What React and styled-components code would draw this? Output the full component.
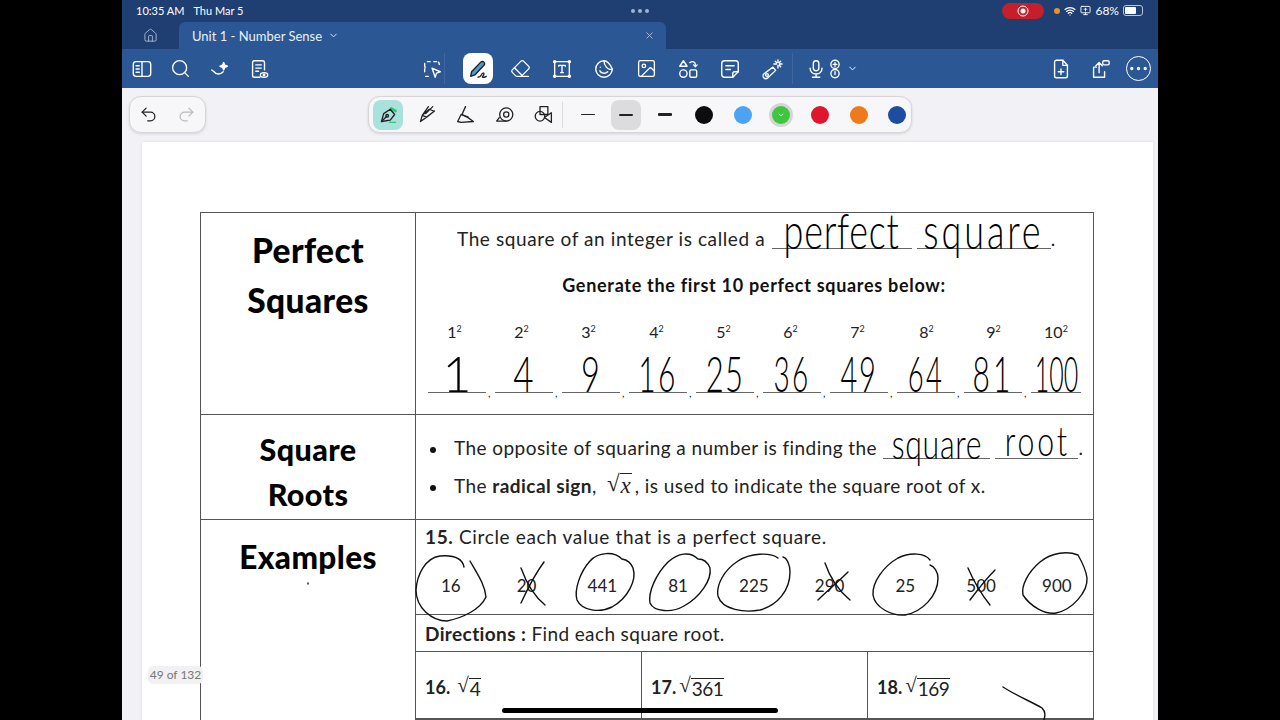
import React from "react";
import styled, { createGlobalStyle } from "styled-components";
import { ChevronDown, Ellipsis, Eraser, House, Image, MonitorUp, Redo2, Search, Undo2, Wifi, X } from "lucide-react";

const GlobalStyle = createGlobalStyle`
  html, body { margin: 0; padding: 0; background: #000; }
  body { font-family: "Lato", "Liberation Sans", sans-serif; color: #222; overflow: hidden; }
`;

const Stage = styled.div`
  position: relative;
  width: 1036px;
  height: 720px;
  margin-left: 122px;
  overflow: hidden;
  display: flex;
  flex-direction: column;
  background: #f2f2f6;
`;

const StatusBar = styled.div`
  height: 22px;
  flex-shrink: 0;
  box-sizing: border-box;
  background: #1f3e72;
  color: #fff;
  font-size: 11px;
  display: flex;
  align-items: center;
  padding: 0 15px 1px 14px;
  gap: 9px;
`;

const Dots = styled.div`
  margin-left: 379px;
  display: flex;
  gap: 3px;
  span { width: 4px; height: 4px; border-radius: 50%; background: #9fb2d0; }
`;

const Status = styled.div`
  margin-left: auto;
  display: flex;
  align-items: center;
  gap: 4px;
  font-size: 12px;
`;

const RecordPill = styled.div`
  width: 42px;
  height: 16px;
  border-radius: 8px;
  background: #c41f2a;
  display: flex;
  align-items: center;
  justify-content: center;
  margin-right: 6px;
  svg { display: block; }
`;

const OrangeDot = styled.div`
  width: 6px;
  height: 6px;
  border-radius: 50%;
  background: #e8912d;
`;

const Battery = styled.div`
  width: 20px;
  height: 11px;
  box-sizing: border-box;
  border: 1px solid #b8c4d8;
  border-radius: 3px;
  padding: 1px;
  div { width: 68%; height: 100%; background: #fff; border-radius: 1px; }
`;

const TabBar = styled.div`
  height: 27px;
  flex-shrink: 0;
  background: #1f3e72;
  display: flex;
`;

const HomeTab = styled.div`
  width: 57px;
  box-sizing: border-box;
  display: flex;
  align-items: center;
  justify-content: center;
  color: #a9b8d2;
`;

const ActiveTab = styled.div`
  width: 487px;
  border-radius: 6px 6px 0 0;
  background: #2b5795;
  color: #eaf0f8;
  font-size: 13px;
  display: flex;
  align-items: center;
  padding: 0 11px 0 13px;
  gap: 6px;
  box-sizing: border-box;
  svg:last-child { margin-left: auto; color: #a9bcd8; }
`;

const Toolbar = styled.div`
  height: 39px;
  flex-shrink: 0;
  background: #2b5795;
  display: flex;
  align-items: center;
  color: #fff;
`;

const ToolCell = styled.div`
  width: ${(p) => p.$w || 42}px;
  height: 31px;
  flex-shrink: 0;
  display: flex;
  align-items: center;
  justify-content: center;
  box-sizing: border-box;
  ${(p) => p.$divider && "border-right: 1px solid #40689f; margin-right: 12px;"}
  ${(p) => p.$active && "background: #fff; border-radius: 8px; width: 30px; margin: 0 6px; color: #222;"}
  ${(p) => p.$tight && "svg + svg { margin-left: -4px; } svg:last-child { margin-left: 1px; }"}
`;

const Spacer = styled.div`
  width: ${(p) => p.$w}px;
  flex-shrink: 0;
`;

const RightTools = styled.div`
  margin-left: auto;
  display: flex;
`;

const PaletteRow = styled.div`
  display: flex;
  height: 37px;
  margin-top: 8px;
  flex-shrink: 0;
  padding-left: 7px;
`;

const Pill = styled.div`
  width: ${(p) => p.$w}px;
  margin-left: ${(p) => p.$ml || 0}px;
  box-sizing: border-box;
  border: 1px solid #d6d6da;
  border-radius: 12px;
  background: #f7f7f9;
  box-shadow: 0 1px 3px rgba(0, 0, 0, 0.12);
  display: flex;
  align-items: center;
  color: #222;
`;

const UndoPill = styled(Pill)`
  justify-content: space-between;
  padding: 0 9px;
`;

const PaletteCell = styled.div`
  width: 38.7px;
  height: 100%;
  flex-shrink: 0;
  display: flex;
  align-items: center;
  justify-content: center;
`;

const PaletteChip = styled.div`
  width: 30px;
  height: 30px;
  border-radius: 8px;
  display: flex;
  align-items: center;
  justify-content: center;
  background: ${(p) => p.$bg || "transparent"};
`;

const PaletteDivider = styled.div`
  width: 6px;
  flex-shrink: 0;
  height: 26px;
  &::before { content: ""; display: block; width: 1px; height: 100%; background: #ddd; }
`;

const WidthBar = styled.div`
  width: 14px;
  height: ${(p) => p.$h}px;
  background: #222;
  border-radius: 1px;
`;

const Swatch = styled.div`
  width: 18px;
  height: 18px;
  border-radius: 50%;
  background: ${(p) => p.$color};
  ${(p) => p.$selected && "box-shadow: 0 0 0 3px #d5d5d8;"}
  display: flex;
  align-items: center;
  justify-content: center;
  color: #e8ffe8;
`;

const Page = styled.div`
  flex: 1;
  margin: 9px 5px 0 20px;
  padding: 70px 59px 0 58px;
  background: #fff;
  box-shadow: 0 0 3px rgba(0, 0, 0, 0.1);
`;

const Table = styled.div`
  display: grid;
  grid-template-columns: 215px 1fr;
  grid-template-rows: 202px 105px 320px;
  border-top: 1px solid #555;
  border-left: 1px solid #555;
`;

const TitleCell = styled.div`
  border-right: 1px solid #555;
  border-bottom: 1px solid #555;
  text-align: center;
  font-size: ${(p) => p.$size}px;
  font-weight: 900;
  letter-spacing: 0.4px;
  color: #000;
  line-height: ${(p) => p.$lh || 50}px;
  padding-top: 12px;
`;

const BodyCell = styled.div`
  border-right: 1px solid #555;
  border-bottom: 1px solid #555;
  min-width: 0;
`;

const Sentence = styled.div`
  display: flex;
  align-items: flex-end;
  height: 36px;
  padding-left: ${(p) => p.$pl || 0}px;
  font-size: 19px;
  line-height: 20px;
  letter-spacing: 0.6px;
  white-space: pre;
`;

const Blank = styled.span`
  display: inline-flex;
  justify-content: center;
  align-items: flex-end;
  width: ${(p) => p.$w}px;
  margin-left: ${(p) => p.$ml || 0}px;
  height: ${(p) => p.$h || 24}px;
  border-bottom: 1px solid #666;
  color: #000;
`;

const Ink = styled.span`
  display: inline-block;
  font-family: "Lato", sans-serif;
  font-weight: 300;
  font-size: ${(p) => p.$size}px;
  letter-spacing: ${(p) => p.$ls || 0}px;
  line-height: 1;
  transform: scaleX(${(p) => p.$sx || 1});
  transform-origin: center bottom;
  margin-bottom: ${(p) => p.$mb || 0}px;
  white-space: nowrap;
`;

const CenterHead = styled.div`
  text-align: center;
  font-size: 18px;
  font-weight: 700;
  letter-spacing: 0.7px;
  margin-top: 22px;
  line-height: 28px;
  padding-right: 1px;
  color: #111;
`;

const Squares = styled.div`
  display: flex;
  margin: 22px 0 0 12px;
`;

const SquareItem = styled.div`
  width: 67px;
  flex-shrink: 0;
  &:last-child { width: 50px; }
`;

const Power = styled.div`
  font-size: 16px;
  height: 22px;
  line-height: 22px;
  text-align: center;
  padding-right: ${(p) => p.$pr}px;
  sup { font-size: 9px; line-height: 0; vertical-align: 6px; }
`;

const AnswerRow = styled.div`
  display: flex;
  align-items: flex-end;
  margin-top: 9px;
  font-size: 11px;
  span.comma { margin-left: 2px; line-height: 1; transform: translateY(5px); }
`;

const BulletLine = styled.div`
  display: flex;
  align-items: flex-end;
  padding-left: 14px;
  height: 27px;
  font-size: 19px;
  letter-spacing: 0.44px;
  white-space: pre;
  margin-top: ${(p) => p.$mt || 0}px;
  &::before {
    content: "";
    width: 6px;
    height: 6px;
    border-radius: 50%;
    background: #111;
    margin: 0 18px 6px 0;
  }
`;

const Radical = styled.span`
  font-family: "Liberation Serif", serif;
  font-size: ${(p) => p.$size || 20}px;
  display: inline-flex;
  align-items: flex-end;
  letter-spacing: 0;
  margin: ${(p) => p.$m || 0};
`;

const Radicand = styled.span`
  border-top: 1px solid #222;
  line-height: 1;
  padding: 0 1px;
  font-size: ${(p) => (p.$italic ? "inherit" : "19px")};
  letter-spacing: ${(p) => (p.$italic ? 0 : "-0.5px")};
  font-style: ${(p) => (p.$italic ? "italic" : "normal")};
  font-family: ${(p) => (p.$italic ? '"Liberation Serif", serif' : '"Lato", sans-serif')};
`;

const ExampleCell = styled(BodyCell)`
  display: flex;
  flex-direction: column;
`;

const CircleBlock = styled.div`
  height: 95px;
  flex-shrink: 0;
  box-sizing: border-box;
  border-bottom: 1px solid #555;
  padding: 5px 0 0 9px;
`;

const PromptLine = styled.div`
  font-size: 19px;
  line-height: 24px;
  letter-spacing: 0.65px;
  b { font-weight: 700; }
`;

const Values = styled.div`
  display: grid;
  grid-template-columns: repeat(9, 75.75px);
  margin: 22px 0 0 -12px;
  font-size: 17px;
  text-align: center;
  line-height: 30px;
`;

const DirectionBlock = styled.div`
  height: 37px;
  flex-shrink: 0;
  box-sizing: border-box;
  border-bottom: 1px solid #555;
  padding-left: 9px;
  font-size: 19px;
  letter-spacing: 0.38px;
  line-height: 37px;
  b { font-weight: 700; }
`;

const RootRow = styled.div`
  display: grid;
  grid-template-columns: 226px 226px 1fr;
  height: 66px;
  flex-shrink: 0;
  border-bottom: 2px solid #555;
`;

const RootCell = styled.div`
  border-right: 1px solid #555;
  padding: 0 0 20px 9px;
  display: flex;
  align-items: flex-end;
  gap: ${(p) => p.$gap || 3}px;
  font-size: 18px;
  &:last-child { border-right: none; }
  b { font-weight: 700; line-height: 22px; }
`;

const PageCount = styled.div`
  position: absolute;
  left: 26px;
  top: 666px;
  width: 55px;
  height: 18px;
  border-radius: 5px;
  background: #f1f1f3;
  color: #777;
  font-size: 12px;
  line-height: 18px;
  text-align: center;
`;

const HomeIndicator = styled.div`
  position: absolute;
  left: 380px;
  top: 708px;
  width: 276px;
  height: 5px;
  border-radius: 3px;
  background: #000;
`;

const InkLayer = styled.svg`
  position: absolute;
  left: -122px;
  top: 0;
  width: 1280px;
  height: 720px;
  pointer-events: none;
  fill: none;
  stroke: #111;
  stroke-width: 1.4;
  stroke-linecap: round;
  stroke-linejoin: round;
`;

const Ic = ({ size = 22, sw = 1.5, children }) => (
  <svg width={size} height={size} viewBox="0 0 24 24" fill="none" stroke="currentColor" strokeWidth={sw} strokeLinecap="round" strokeLinejoin="round">
    {children}
  </svg>
);

const SidebarIcon = () => (
  <Ic><rect x="2.500" y="4" width="19" height="16" rx="3" /><path d="M12 4v16M5.500 8.500h3.500M5.500 12h3.500M5.500 15.500h3.500" /></Ic>
);
const SparkIcon = () => (
  <Ic><path d="M3 13l2.500 2M5.500 15c2 3 7 3.500 10 0" /><path d="M16 5l1.200 2.800L20 9l-2.800 1.200L16 13l-1.200-2.800L12 9l2.800-1.200z" fill="currentColor" /></Ic>
);
const DocEyeIcon = () => (
  <Ic><path d="M13 21H7a2 2 0 0 1-2-2V5a2 2 0 0 1 2-2h9a2 2 0 0 1 2 2v8" /><path d="M8.500 7.500h6M8.500 11h6M8.500 14.500h3" /><ellipse cx="17.500" cy="18.500" rx="4" ry="2.500" /><circle cx="17.500" cy="18.500" r=".8" /></Ic>
);
const LassoIcon = () => (
  <Ic><path d="M7 4h3M14 4h3c2 0 3 1 3 3M4 8V6M4 12v3M5 20h5M13 20h0M4 8c0 1 1 2 0 4" strokeDasharray="3 2" /><path d="M12 11l9 4-4 1.500-1.500 4.500z" /></Ic>
);
const PenSignIcon = () => (
  <Ic><path d="M4 20l1-5L15 4.500c1-1 2.500-1 3.500 0s1 2.500 0 3.500L8.500 18.500z" fill="#4d9bd0" stroke="#222" /><path d="M12 21c2 0 3-1 4-3 .8-2 2.500-2 2.500-.5 0 2-2.500 3-1.500 3.500 1.500.5 3-.5 4-1" /></Ic>
);
const TextBoxIcon = () => (
  <Ic><rect x="4" y="4" width="16" height="16" /><path d="M8.500 9V8h7v1M12 8v8M10.500 16h3" /><circle cx="4" cy="4" r="1.200" /><circle cx="20" cy="4" r="1.200" /><circle cx="4" cy="20" r="1.200" /><circle cx="20" cy="20" r="1.200" /></Ic>
);
const StickerIcon = () => (
  <Ic><path d="M12 3a9 9 0 1 0 9 9c-2 1-5 0-6.500-2S12 5 12 3z" /><path d="M12 3c3 0 7 3.500 9 9" /><path d="M7.500 14c1.500 3 6 3.500 8.500 1M8 10h0" /></Ic>
);
const ShapesIcon = () => (
  <Ic><path d="M7 3l4 6H3z" /><path d="M14 5c3-2 6-1 6 2v2M18 7.500l2 2 2-2" /><circle cx="7" cy="17" r="4" /><rect x="14" y="13" width="7.500" height="8" rx="1.500" /></Ic>
);
const NoteIcon = () => (
  <Ic><path d="M15 21H6a3 3 0 0 1-3-3V6a3 3 0 0 1 3-3h12a3 3 0 0 1 3 3v9z" /><path d="M15 21v-4a2 2 0 0 1 2-2h4M7.500 8.500h9M7.500 12.500h5" /></Ic>
);
const LaserIcon = () => (
  <Ic><path d="M3 17.500L13 10l3 3.500-9 8.500c-1.500 1-3 .5-4-.5s-1-3 0-4z" /><circle cx="6.500" cy="18.500" r="1.500" /><path d="M18.500 2v3M18.500 8v3M14 6.500h3M20 6.500h3M15.500 3.500l1.500 1.500M20 8l1.500 1.500M21.500 3.500L20 5" /></Ic>
);
const MicIcon = () => (
  <Ic><rect x="8" y="3" width="6" height="11" rx="3" /><path d="M4.500 11c0 4 3 6.500 6.500 6.500s6.500-2.500 6.500-6.500M11 17.500V21M7 21h8" /></Ic>
);
const AudioIcon = () => (
  <Ic><circle cx="12" cy="7" r="4.500" /><path d="M12 5v4M10 7h4" /><circle cx="12" cy="17" r="4.500" /><path d="M12 15v3" /></Ic>
);
const PageAddIcon = () => (
  <Ic><path d="M14 2.500H7a2 2 0 0 0-2 2v15a2 2 0 0 0 2 2h10a2 2 0 0 0 2-2V8z" /><path d="M14 2.500V8h5M12 12v6M9 15h6" /></Ic>
);
const ShareIcon = () => (
  <Ic><path d="M8 10H5v11h12v-6" /><path d="M11 16V5M7.500 8.500L11 5l3.500 3.500" /><rect x="15" y="3" width="7" height="4.500" rx="1.500" /></Ic>
);
const FountainPen = () => (
  <Ic size={21}><path d="M15 5l5 3" stroke="#37c46b" strokeWidth="3" /><path d="M4 20l2.500-9L14 6l5 6-5 6.500z" /><path d="M4 20l6-6" /><circle cx="10.500" cy="13.500" r="1.500" /><path d="M13 21h7" stroke="#37c46b" strokeWidth="1.500" /></Ic>
);
const PencilTool = () => (
  <Ic size={21}><path d="M4 20l2-7 8-7 5 2M6 13l5 2 9-7M4 20l7-5M13 3l-7 10M18 3l-8 8" /></Ic>
);
const MarkerTool = () => (
  <Ic size={21}><path d="M12 3L8 12M3 20l4-8 7 3 7 5-14 1z" /><path d="M8 12l7 3" /></Ic>
);
const TapeTool = () => (
  <Ic size={21}><circle cx="14" cy="12" r="7.500" /><circle cx="14" cy="12" r="3" /><path d="M3 19.500h11M3 19.500l3-4" /></Ic>
);
const ShapeTool = () => (
  <Ic size={21}><rect x="8" y="3" width="9" height="9" /><circle cx="8" cy="14" r="5.500" /><path d="M21 10v11l-8-5.500z" /></Ic>
);

const SQUARES = [
  ["1", "1", 14, 1, 0],
  ["2", "4", 14, 0.7, 0],
  ["3", "9", 14, 0.65, 0],
  ["4", "16", 12, 0.6, 4],
  ["5", "25", 12, 0.62, 2],
  ["6", "36", 12, 0.56, 4],
  ["7", "49", 12, 0.58, 3],
  ["8", "64", 8, 0.55, 4],
  ["9", "81", 8, 0.6, 5],
  ["10", "100", 0, 0.5, 0],
];

const VALUES = ["16", "20", "441", "81", "225", "290", "25", "500", "900"];

const COLORS = ["#0d0d0d", "#4aa3f5", "#3fc63f", "#e0162f", "#ee7a1c", "#1c4da0"];

export default function App() {
  return (
    <Stage>
      <GlobalStyle />
      <StatusBar>
        <span>10:35 AM</span>
        <span>Thu Mar 5</span>
        <Dots><span /><span /><span /></Dots>
        <Status>
          <RecordPill>
            <svg width="12" height="12" viewBox="0 0 12 12"><circle cx="6" cy="6" r="5" fill="none" stroke="#fff" /><circle cx="6" cy="6" r="2.500" fill="#fff" /></svg>
          </RecordPill>
          <OrangeDot />
          <Wifi size={12} strokeWidth={2.500} />
          <MonitorUp size={11} />
          <span>68%</span>
          <Battery><div /></Battery>
        </Status>
      </StatusBar>
      <TabBar>
        <HomeTab><House size={15} strokeWidth={1.500} /></HomeTab>
        <ActiveTab>
          <span>Unit 1 - Number Sense</span>
          <ChevronDown size={11} />
          <X size={11} />
        </ActiveTab>
      </TabBar>
      <Toolbar>
        <ToolCell $w={39}><SidebarIcon /></ToolCell>
        <ToolCell $w={39}><Search size={21} strokeWidth={1.500} /></ToolCell>
        <ToolCell $w={39}><SparkIcon /></ToolCell>
        <ToolCell $w={39}><DocEyeIcon /></ToolCell>
        <Spacer $w={141} />
        <ToolCell $w={26} $divider><LassoIcon /></ToolCell>
        <ToolCell $active><PenSignIcon /></ToolCell>
        <ToolCell><Eraser size={21} strokeWidth={1.500} /></ToolCell>
        <ToolCell><TextBoxIcon /></ToolCell>
        <ToolCell><StickerIcon /></ToolCell>
        <ToolCell><Image size={21} strokeWidth={1.500} /></ToolCell>
        <ToolCell><ShapesIcon /></ToolCell>
        <ToolCell><NoteIcon /></ToolCell>
        <ToolCell $divider><LaserIcon /></ToolCell>
        <ToolCell $w={54} $tight>
          <MicIcon />
          <AudioIcon />
          <ChevronDown size={11} />
        </ToolCell>
        <RightTools>
          <ToolCell $w={39}><PageAddIcon /></ToolCell>
          <ToolCell $w={39}><ShareIcon /></ToolCell>
          <ToolCell $w={39}><Ellipsis size={23} strokeWidth={1.500} style={{ border: "1.500px solid #fff", borderRadius: "50%" }} /></ToolCell>
        </RightTools>
      </Toolbar>
      <PaletteRow>
        <UndoPill $w={77}>
          <Undo2 size={19} strokeWidth={1.600} />
          <Redo2 size={19} strokeWidth={1.600} color="#bbb" />
        </UndoPill>
        <Pill $w={544} $ml={162}>
          <PaletteCell><PaletteChip $bg="#a9e1dd"><FountainPen /></PaletteChip></PaletteCell>
          <PaletteCell><PencilTool /></PaletteCell>
          <PaletteCell><MarkerTool /></PaletteCell>
          <PaletteCell><TapeTool /></PaletteCell>
          <PaletteCell><ShapeTool /></PaletteCell>
          <PaletteDivider />
          <PaletteCell><WidthBar $h={1} /></PaletteCell>
          <PaletteCell><PaletteChip $bg="#dcdcdf"><WidthBar $h={2} /></PaletteChip></PaletteCell>
          <PaletteCell><WidthBar $h={3} /></PaletteCell>
          {COLORS.map((c, i) => (
            <PaletteCell key={c}>
              <Swatch $color={c} $selected={i === 2}>
                {i === 2 && <ChevronDown size={8} strokeWidth={3} />}
              </Swatch>
            </PaletteCell>
          ))}
        </Pill>
      </PaletteRow>
      <Page>
        <Table>
          <TitleCell $size={33.5}>Perfect<br />Squares</TitleCell>
          <BodyCell>
            <Sentence $pl={41}>
              The square of an integer is called a{" "}
              <Blank $w={140} $ml={1}><Ink $size={50} $ls={1} $sx={0.72} $mb={-7}>perfect</Ink></Blank>
              <Blank $w={134} $ml={5}><Ink $size={50} $ls={4} $sx={0.72} $mb={-7}>square</Ink></Blank>.
            </Sentence>
            <CenterHead>Generate the first 10 perfect squares below:</CenterHead>
            <Squares>
              {SQUARES.map(([base, ans, pr, sx, ls], i) => (
                <SquareItem key={base}>
                  <Power $pr={pr}>{base}<sup>2</sup></Power>
                  <AnswerRow>
                    <Blank $w={i === 9 ? 50 : 58} $h={40}>
                      <Ink $size={50} $sx={sx} $ls={ls} $mb={-6}>{ans}</Ink>
                    </Blank>
                    {i < 9 && <span className="comma">,</span>}
                  </AnswerRow>
                </SquareItem>
              ))}
            </Squares>
          </BodyCell>
          <TitleCell $size={30.5} $lh={45}>Square<br />Roots</TitleCell>
          <BodyCell>
            <BulletLine $mt={17}>
              The opposite of squaring a number is finding the{" "}
              <Blank $w={107} $h={27} $ml={1}><Ink $size={42} $ls={1} $sx={0.72} $mb={-6}>square</Ink></Blank>
              <Blank $w={83} $h={27} $ml={5}><Ink $size={42} $ls={4} $sx={0.72} $mb={-3}>root</Ink></Blank>.
            </BulletLine>
            <BulletLine $mt={11}>
              The <b>radical sign</b>,{" "}
              <Radical $size={23} $m="0 3px 0 5px">√<Radicand $italic>x</Radicand></Radical>
              {" "}, is used to indicate the square root of x.
            </BulletLine>
          </BodyCell>
          <TitleCell $size={31.5}>Examples</TitleCell>
          <ExampleCell>
            <CircleBlock>
              <PromptLine><b>15.</b> Circle each value that is a perfect square.</PromptLine>
              <Values>
                {VALUES.map((v) => <span key={v}>{v}</span>)}
              </Values>
            </CircleBlock>
            <DirectionBlock><b>Directions :</b> Find each square root.</DirectionBlock>
            <RootRow>
              <RootCell $gap={7}><b>16.</b><Radical $size={21}>√<Radicand>4</Radicand></Radical></RootCell>
              <RootCell><b>17.</b><Radical $size={21}>√<Radicand>361</Radicand></Radical></RootCell>
              <RootCell><b>18.</b><Radical $size={21}>√<Radicand>169</Radicand></Radical></RootCell>
            </RootRow>
          </ExampleCell>
        </Table>
      </Page>
      <InkLayer viewBox="0 0 1280 720">
        <path d="M464 567C462 557 452 555 440 556C425 558 417 575 416 590C416 608 432 621 447 621C462 618 480 610 486 597C485 585 478 575 470 561" />
        <path d="M622 559C614 551 598 552 590 561C580 572 574 590 577 600C582 611 600 613 612 607C628 598 637 580 633 568C631 563 628 560 622 559" />
        <path d="M698 559C690 551 678 553 668 562C656 574 648 592 650 603C654 612 672 613 684 606C700 597 712 580 710 568C708 563 704 559 698 559" />
        <path d="M778 558C770 552 750 553 738 561C724 570 716 585 718 596C722 610 745 613 760 610C778 605 790 590 790 572C790 565 787 558 783 557" />
        <path d="M930 560C925 553 910 552 898 558C884 566 872 582 873 595C875 608 892 616 905 615C922 612 938 596 938 578C938 572 934 566 930 565" />
        <path d="M1078 555C1068 551 1052 552 1040 562C1028 572 1021 586 1023 595C1030 606 1045 615 1056 613C1072 610 1088 592 1087 578C1086 570 1082 562 1078 555" />
        <path d="M521 568C526 582 534 596 545 605M544 562C535 574 527 590 521 603" />
        <path d="M825 563C830 578 838 590 850 600M848 572C838 582 826 592 818 600" />
        <path d="M968 568C974 582 982 595 990 605M995 570C985 580 976 592 970 600" />
        <path d="M1003 687C1015 695 1032 702 1042 708C1046 712 1045 716 1044 720" />
        <path d="M308 583l0 1" />
      </InkLayer>
      <PageCount>49 of 132</PageCount>
      <HomeIndicator />
    </Stage>
  );
}
